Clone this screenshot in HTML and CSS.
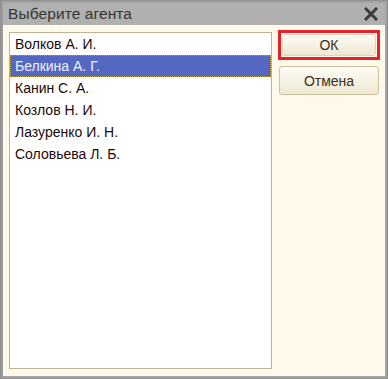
FILE: index.html
```html
<!DOCTYPE html>
<html>
<head>
<meta charset="utf-8">
<link rel="stylesheet" href="styles.css">
</head>
<body>
<div class="window">
  <div class="titlebar">
    <span class="title">Выберите агента</span>
    <svg class="close" width="14" height="14" viewBox="0 0 14 14"><path d="M2 2 L12 12 M12 2 L2 12" stroke="#3c3c3c" stroke-width="3" stroke-linecap="square"/></svg>
  </div>
  <div class="content">
    <div class="listbox">
      <div class="row">Волков А. И.</div>
      <div class="row selected">Белкина А. Г.</div>
      <div class="row">Канин С. А.</div>
      <div class="row">Козлов Н. И.</div>
      <div class="row">Лазуренко И. Н.</div>
      <div class="row">Соловьева Л. Б.</div>
    </div>
    <div class="buttons">
      <div class="focus"><div class="btn ok">ОК</div></div>
      <div class="btn cancel">Отмена</div>
    </div>
  </div>
</div>
</body>
</html>
```
FILE: styles.css
```css
html, body {
  margin: 0;
  padding: 0;
  width: 388px;
  height: 379px;
  overflow: hidden;
  font-family: "Liberation Sans", Arial, sans-serif;
}
.window {
  box-sizing: border-box;
  width: 388px;
  height: 379px;
  border: 3px solid #a3a3a3;
  border-left-color: #9c9c9c;
  outline: 1px solid #8e8e8e;
  outline-offset: -1px;
  background: #b0b0b0;
  display: flex;
  flex-direction: column;
}
.titlebar {
  height: 22px;
  display: flex;
  align-items: center;
  justify-content: space-between;
  padding: 0 7px 0 5px;
  background: #b0b0b0;
}
.title {
  font-size: 15.5px;
  color: #353535;
  letter-spacing: 0.1px;
}
.close {
  display: block;
}
.content {
  flex: 1;
  background: #fff9ec;
  display: flex;
  gap: 6px;
  padding: 5px 5px 7px 6px;
}
.listbox {
  box-sizing: border-box;
  width: 263px;
  margin-top: 2px;
  background: #ffffff;
  border: 1px solid #bcb392;
}
.row {
  height: 22px;
  line-height: 22px;
  padding-left: 5px;
  font-size: 14px;
  color: #1a0a0a;
}
.row.selected {
  background: #5468c2;
  color: #eef2ff;
  outline: 1px dotted #b89a40;
  outline-offset: -1px;
}
.buttons {
  display: flex;
  flex-direction: column;
  gap: 6px;
}
.focus {
  box-sizing: border-box;
  width: 102px;
  height: 30px;
  border: 3px solid #e8202a;
  padding: 1px;
}
.btn {
  box-sizing: border-box;
  display: flex;
  align-items: center;
  justify-content: center;
  font-size: 14px;
  color: #3a3020;
  background: linear-gradient(#fdfcf5, #eee8d2);
  border: 1px solid #cbc19c;
  border-radius: 3px;
}
.ok {
  width: 94px;
  height: 22px;
  border-color: #ddd5b8;
}
.cancel {
  width: 100px;
  height: 29px;
  margin-left: 1px;
}
```
